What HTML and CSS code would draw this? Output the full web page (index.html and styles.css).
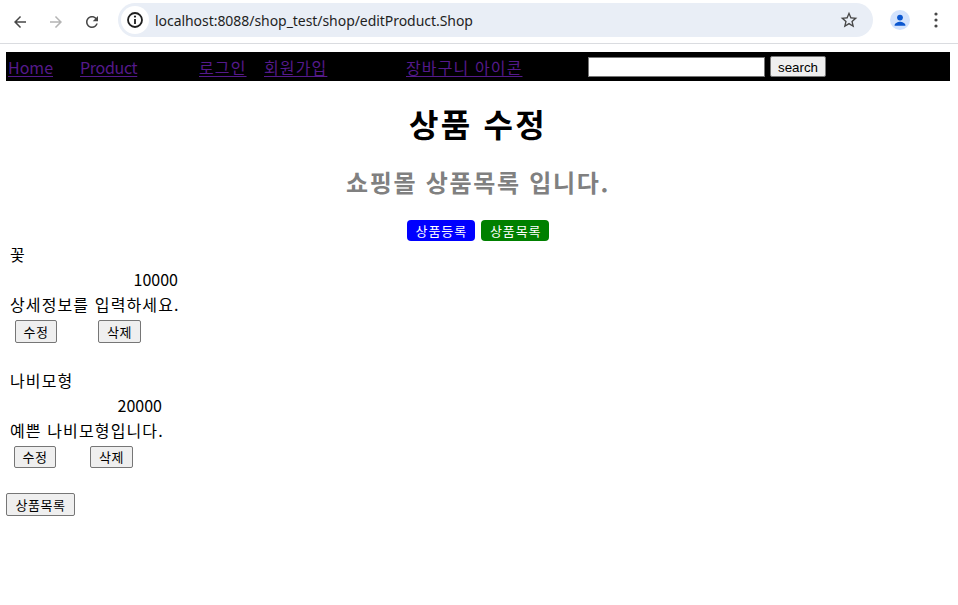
FILE: index.html
```html
<!DOCTYPE html>
<html lang="ko">
<head>
<meta charset="utf-8">
<title>editProduct</title>
<link rel="stylesheet" href="styles.css">
</head>
<body>
<div class="chrome">
  <div class="nav-btns">
    <span class="cbtn"><svg width="18" height="18" viewBox="0 0 24 24"><path d="M20 11H7.83l5.59-5.59L12 4l-8 8 8 8 1.41-1.41L7.83 13H20v-2z" fill="#474747"/></svg></span>
    <span class="cbtn"><svg width="18" height="18" viewBox="0 0 24 24"><path d="M4 11h12.17l-5.59-5.59L12 4l8 8-8 8-1.41-1.41L16.17 13H4v-2z" fill="#b4b4b4"/></svg></span>
    <span class="cbtn"><svg width="18" height="18" viewBox="0 0 24 24"><path d="M17.65 6.35C16.2 4.9 14.21 4 12 4c-4.42 0-7.99 3.58-7.99 8s3.57 8 7.99 8c3.73 0 6.84-2.55 7.73-6h-2.08c-.82 2.33-3.04 4-5.65 4-3.31 0-6-2.69-6-6s2.69-6 6-6c1.66 0 3.14.69 4.22 1.78L13 11h7V4l-2.35 2.35z" fill="#474747"/></svg></span>
  </div>
  <div class="omnibox">
    <span class="info"><svg width="18" height="18" viewBox="0 0 18 18"><circle cx="9" cy="9" r="7" fill="none" stroke="#1f1f1f" stroke-width="1.8"/><rect x="8.1" y="8" width="1.8" height="5" fill="#1f1f1f"/><circle cx="9" cy="5.6" r="1.1" fill="#1f1f1f"/></svg></span>
    <span class="url">localhost:8088/shop_test/shop/editProduct.Shop</span>
    <span class="star"><svg width="20" height="20" viewBox="0 0 24 24"><path d="M22 9.24l-7.19-.62L12 2 9.19 8.63 2 9.24l5.46 4.73L5.82 21 12 17.27 18.18 21l-1.63-7.03L22 9.24zM12 15.4l-3.76 2.27 1-4.28-3.32-2.88 4.38-.38L12 6.1l1.71 4.04 4.38.38-3.32 2.88 1 4.28L12 15.4z" fill="#474747"/></svg></span>
  </div>
  <span class="avatar"><svg width="20" height="20" viewBox="0 0 20 20"><circle cx="10" cy="10" r="10" fill="#d3e3fd"/><circle cx="10" cy="7.6" r="2.9" fill="#0b57d0"/><path d="M4.6 15.2c0-2.3 3.6-3.5 5.4-3.5s5.4 1.2 5.4 3.5v.6H4.6z" fill="#0b57d0"/></svg></span>
  <span class="kebab"><svg width="4" height="16" viewBox="0 0 4 16"><circle cx="2" cy="2" r="1.6" fill="#474747"/><circle cx="2" cy="8" r="1.6" fill="#474747"/><circle cx="2" cy="14" r="1.6" fill="#474747"/></svg></span>
</div>

<div class="page">
  <nav class="topnav">
    <a class="nl nl-home" href="#">Home</a>
    <a class="nl nl-product" href="#">Product</a>
    <a class="nl nl-login ko" href="#">로그인</a>
    <a class="nl nl-join ko" href="#">회원가입</a>
    <a class="nl nl-cart ko" href="#">장바구니 아이콘</a>
    <input class="search-input" type="text">
    <button class="search-btn">search</button>
  </nav>

  <h1 class="title ko">상품 수정</h1>
  <h2 class="subtitle ko">쇼핑몰 상품목록 입니다.</h2>
  <div class="actions">
    <span class="pill pill-blue ko">상품등록</span>
    <span class="pill pill-green ko">상품목록</span>
  </div>

  <div class="item item-a">
    <div class="line ko">꽃</div>
    <div class="line price">10000</div>
    <div class="line ko">상세정보를 입력하세요.</div>
    <div class="btnrow">
      <button class="ibtn">수정</button>
      <button class="ibtn">삭제</button>
    </div>
  </div>

  <div class="item item-b">
    <div class="line ko">나비모형</div>
    <div class="line price">20000</div>
    <div class="line ko">예쁜 나비모형입니다.</div>
    <div class="btnrow">
      <button class="ibtn">수정</button>
      <button class="ibtn">삭제</button>
    </div>
  </div>

  <button class="ibtn list-btn">상품목록</button>
</div>
</body>
</html>
```
FILE: styles.css
```css
html, body {
  margin: 0;
  padding: 0;
  background: #fff;
}
body {
  font-family: "Noto Sans CJK KR", "Noto Sans", sans-serif;
  color: #000;
  width: 958px;
  height: 605px;
  overflow: hidden;
}
.ko { letter-spacing: 0.07em; }

/* browser chrome */
.chrome {
  height: 43px;
  border-bottom: 1px solid #dadce0;
  display: flex;
  align-items: center;
  box-sizing: content-box;
}
.nav-btns {
  display: flex;
  align-items: center;
  padding-left: 2px;
}
.cbtn {
  width: 36px;
  height: 34px;
  display: flex;
  align-items: center;
  justify-content: center;
}
.cbtn svg { display: block; }
.omnibox {
  margin-left: 8px;
  width: 755px;
  height: 34px;
  border-radius: 17px;
  background: #e9eef6;
  display: flex;
  align-items: center;
  margin-top: -3px;
}
.info {
  width: 18px;
  height: 18px;
  display: flex;
  align-items: center;
  justify-content: center;
  background: #fff;
  border-radius: 50%;
  box-shadow: 0 0 0 5px #fff;
  margin-left: 8px;
}
.info svg { display: block; }
.url {
  margin-left: 11px;
  font-family: "Noto Sans", sans-serif;
  font-size: 14px;
  color: #1f1f1f;
  flex: 1;
  letter-spacing: -0.05px;
}
.star {
  margin-right: 14px;
  display: flex;
}
.avatar {
  margin-left: 17px;
  display: flex;
  margin-top: -3px;
}
.kebab {
  margin-left: 24px;
  display: flex;
  margin-top: -3px;
}

/* page */
.page {
  margin: 8px 8px 0 6px;
}
.topnav {
  background: #000;
  height: 29px;
  display: flex;
  align-items: center;
  padding-left: 2px;
}
.nl {
  flex: none;
  color: #551a8b;
  font-size: 16px;
  line-height: 22px;
  text-decoration: underline;
  text-underline-offset: 2px;
  white-space: nowrap;
  margin-top: 1px;
}
.nl-home { width: 72px; }
.nl-product { width: 119px; letter-spacing: -0.02em; }
.nl-login { width: 65px; }
.nl-join { width: 142px; }
.nl-cart { width: 182px; }
.search-input {
  flex: none;
  width: 177px;
  height: 20px;
  box-sizing: border-box;
  margin: 0;
  border: 1px solid #767676;
  background: #fff;
  padding: 0 2px;
}
.search-btn {
  flex: none;
  margin: 0 0 0 5px;
  width: 56px;
  height: 21px;
  box-sizing: border-box;
  font-family: "Liberation Sans", Arial, sans-serif;
  font-size: 13.333px;
  background: #efefef;
  border: 1px solid #767676;
  border-radius: 2px;
  padding: 1px 0 0;
  color: #000;
}

.title {
  margin: 22px 0 0;
  text-align: center;
  font-size: 32px;
  line-height: 40px;
  font-weight: 700;
}
.subtitle {
  margin: 23px 0 0;
  text-align: center;
  font-size: 24px;
  line-height: 32px;
  font-weight: 700;
  color: #808080;
}
.actions {
  margin-top: 22px;
  display: flex;
  justify-content: center;
  gap: 6px;
}
.pill {
  height: 21px;
  padding: 0 8px 0 9px;
  border-radius: 4px;
  color: #fff;
  font-size: 13px;
  line-height: 21px;
  display: inline-flex;
  align-items: center;
}
.pill-blue { background: #0000ff; }
.pill-green { background: #008000; }

.item {
  margin-left: 4px;
  font-size: 16px;
}
.item-a { margin-top: 1px; width: 168px; }
.item-b { margin-top: 25px; width: 152px; }
.line {
  height: 25px;
  line-height: 25px;
  white-space: nowrap;
}
.price { text-align: right; }
.btnrow {
  display: flex;
  margin-top: 3px;
}
.ibtn {
  font-family: "Noto Sans CJK KR", sans-serif;
  font-size: 13px;
  letter-spacing: 0.04em;
  background: #efefef;
  border: 1px solid #767676;
  border-radius: 2px;
  color: #000;
  padding: 0;
  height: 23px;
  line-height: 20px;
  margin: 0;
}
.item-a .btnrow { padding-left: 5px; gap: 41px; }
.item-a .ibtn { width: 42px; }
.item-a .ibtn + .ibtn { width: 43px; }
.item-b .btnrow { padding-left: 4px; gap: 34px; }
.item-b .ibtn { width: 42px; height: 22px; }
.item-b .ibtn + .ibtn { width: 43px; }
.list-btn {
  display: block;
  margin-top: 25px;
  width: 69px;
  height: 23px;
}
```
